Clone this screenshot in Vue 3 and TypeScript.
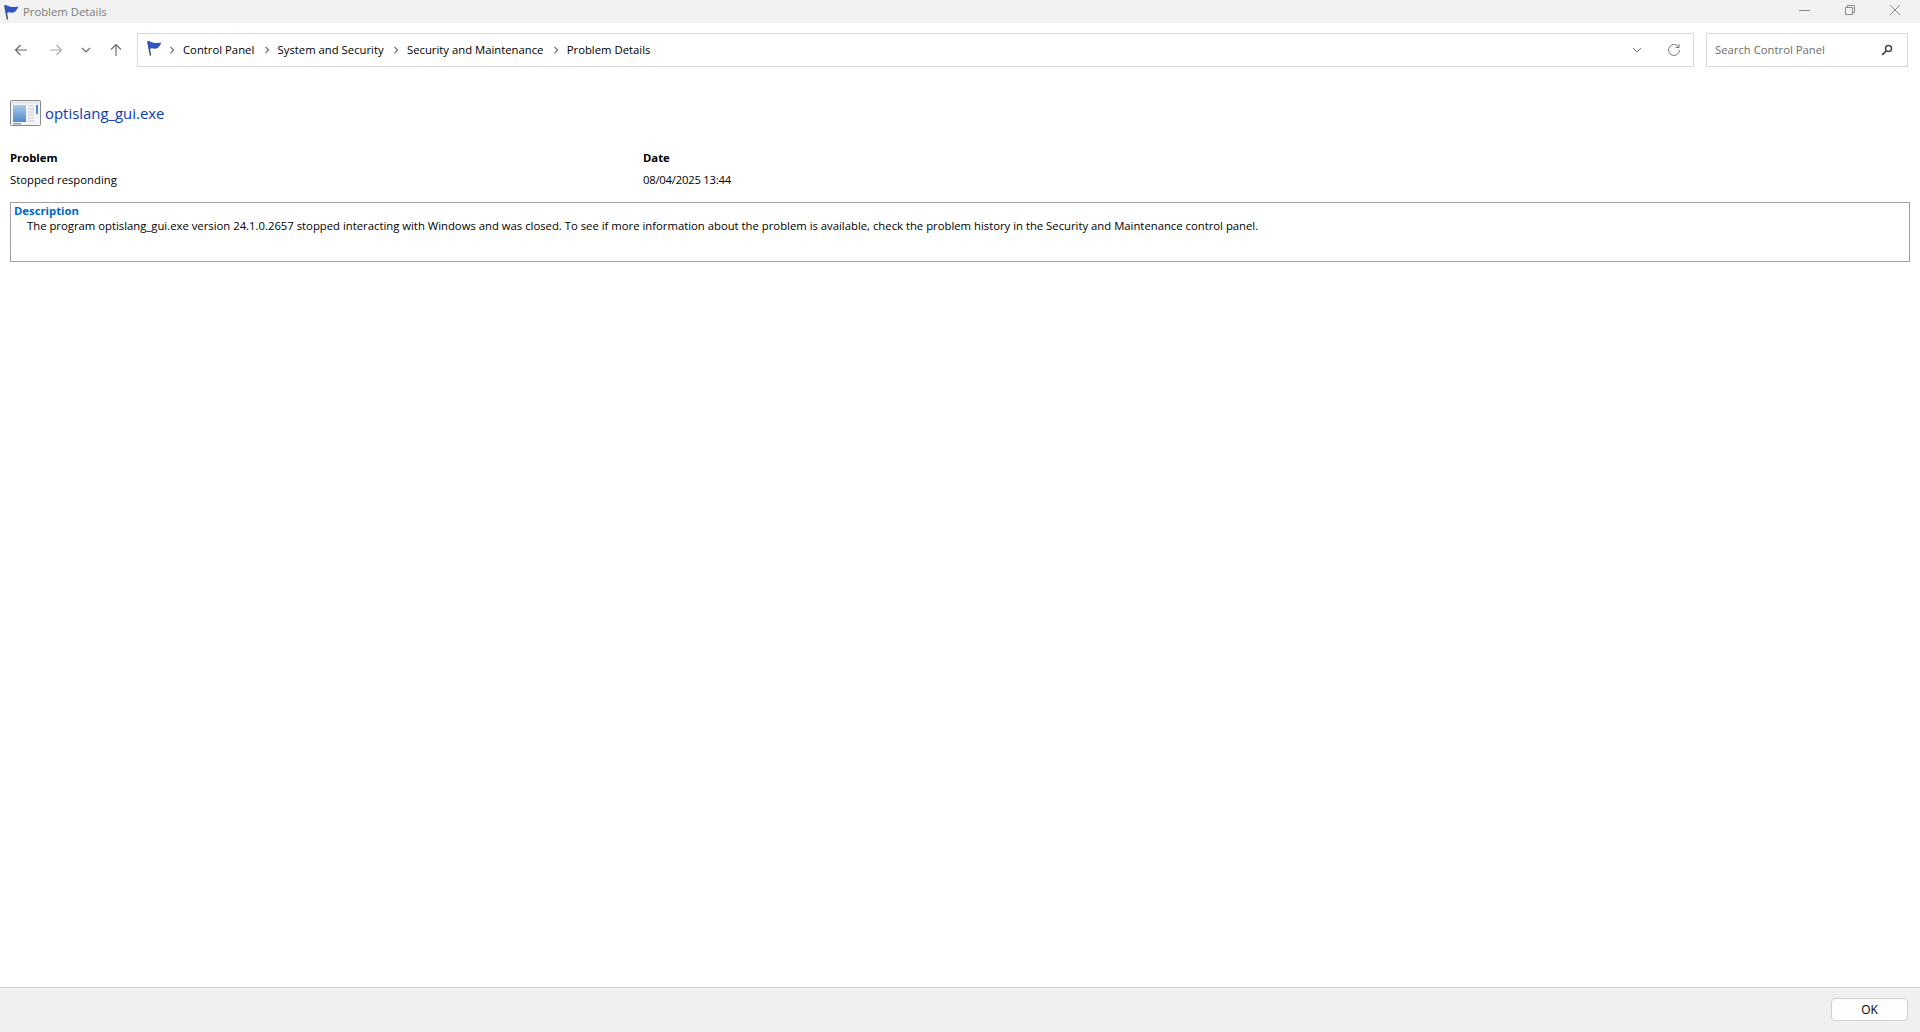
<script setup lang="ts">
const crumbs: string[] = ['Control Panel', 'System and Security', 'Security and Maintenance', 'Problem Details']
</script>

<template>
  <div class="window">
    <header class="titlebar">
      <svg class="title-flag" viewBox="0 0 16 16" width="16" height="16">
        <path d="M4.500 15.500 1.800 1.500" stroke="#3d4a5c" stroke-width="1.400" fill="none" />
        <path d="M1.500 .8c2.700.4 4.700 1.900 6.900 2.200 2.100.3 4.600 0 7.100-.6-.9 2-2.300 4-3.700 5.600-2 1-3.500.9-4.700.5-1.500-.5-2.500-.2-3.600 2z" fill="#2f55c8" />
      </svg>
      <span class="title-text">Problem Details</span>
      <div class="window-buttons">
        <svg viewBox="0 0 12 12" width="12" height="12"><path d="M0 6.500h11" stroke="#8a8a8a" fill="none" /></svg>
        <svg viewBox="0 0 12 12" width="12" height="12"><path d="M1.500 3.500h7v7h-7zM3.500 3.500v-2h7v7h-2" stroke="#8a8a8a" fill="none" /></svg>
        <svg viewBox="0 0 12 12" width="12" height="12"><path d="M1 1l10 10M11 1 1 11" stroke="#8a8a8a" fill="none" /></svg>
      </div>
    </header>

    <nav class="toolbar">
      <div class="nav-buttons">
        <svg class="back" viewBox="0 0 14 14" width="14" height="14"><path d="M13 7H1.500M6.500 2 1.500 7l5 5" stroke="#666" stroke-width="1.100" fill="none" /></svg>
        <svg class="forward" viewBox="0 0 14 14" width="14" height="14"><path d="M1 7h11.500M7.500 2l5 5-5 5" stroke="#aaa" stroke-width="1.100" fill="none" /></svg>
        <svg class="recent" viewBox="0 0 10 10" width="10" height="10"><path d="M1 3l4 4 4-4" stroke="#666" stroke-width="1.100" fill="none" /></svg>
        <svg class="up" viewBox="0 0 14 14" width="14" height="14"><path d="M7 13V1.500M2 6.500l5-5 5 5" stroke="#666" stroke-width="1.100" fill="none" /></svg>
      </div>
      <div class="address">
        <svg class="flag" viewBox="0 0 16 16" width="16" height="16">
          <path d="M4.500 15.500 1.800 1.500" stroke="#3d4a5c" stroke-width="1.400" fill="none" />
          <path d="M1.500 .8c2.700.4 4.700 1.900 6.900 2.200 2.100.3 4.600 0 7.100-.6-.9 2-2.300 4-3.700 5.600-2 1-3.500.9-4.700.5-1.500-.5-2.500-.2-3.600 2z" fill="#2f55c8" />
        </svg>
        <template v-for="c in crumbs" :key="c">
          <svg class="sep" viewBox="0 0 6 8" width="6" height="8"><path d="M1.500 .8 4.700 4 1.500 7.200" stroke="#666" stroke-width="1.100" fill="none" /></svg>
          <span class="crumb">{{ c }}</span>
        </template>
        <div class="address-end">
          <svg viewBox="0 0 10 6" width="10" height="6"><path d="M1 1l4 4 4-4" stroke="#777" fill="none" /></svg>
          <svg viewBox="0 0 14 14" width="14" height="14"><path d="M11.800 4.300A5.500 5.500 0 1 0 12.500 7M12 1v3.500H8.500" stroke="#777" fill="none" /></svg>
        </div>
      </div>
      <div class="search">
        <span class="search-text">Search Control Panel</span>
        <svg viewBox="0 0 12 12" width="12" height="12"><circle cx="7.500" cy="4.500" r="3" stroke="#444" stroke-width="1.500" fill="none" /><path d="M5.200 6.800 1.200 10.800" stroke="#444" stroke-width="1.700" fill="none" /></svg>
      </div>
    </nav>

    <main class="content">
      <div class="app-head">
        <svg class="app-icon" viewBox="0 0 31 26" width="31" height="26">
          <defs>
            <linearGradient id="pane" x1="0" y1="0" x2="0" y2="1">
              <stop offset="0" stop-color="#a9c9e8" />
              <stop offset="1" stop-color="#4f8ccd" />
            </linearGradient>
          </defs>
          <rect x=".5" y=".5" width="30" height="25" rx="1" fill="#f4f5f6" stroke="#85888c" />
          <rect x="1.500" y="1.500" width="28" height="2" fill="#e2e4e7" />
          <rect x="3" y="5" width="13" height="17" fill="url(#pane)" />
          <path d="M18 6h6M18 9h6M18 12h6M18 15h6M18 18h6M18 21h6" stroke="#c4c7cb" fill="none" />
          <rect x="26" y="5" width="2" height="9" fill="#4a8fd6" />
          <rect x="3" y="23" width="8" height="1.500" fill="#9a9da1" />
        </svg>
        <span class="app-name">optislang_gui.exe</span>
      </div>
      <div class="facts">
        <div class="fact problem">
          <div class="label">Problem</div>
          <div class="value">Stopped responding</div>
        </div>
        <div class="fact">
          <div class="label">Date</div>
          <div class="value date">08/04/2025 13:44</div>
        </div>
      </div>
      <section class="description">
        <div class="desc-title">Description</div>
        <p class="desc-text">The program optislang_gui.exe version 24.1.0.2657 stopped interacting with Windows and was closed. To see if more information about the problem is available, check the problem history in the Security and Maintenance control panel.</p>
      </section>
    </main>

    <footer class="footer">
      <button class="ok" type="button">OK</button>
    </footer>
  </div>
</template>

<style scoped>
.window {
  width: 1920px;
  height: 1032px;
  display: flex;
  flex-direction: column;
  background: #fff;
  color: #000;
  font-family: "Open Sans", "Noto Sans", "Liberation Sans", sans-serif;
  font-size: 11.300px;
  overflow: hidden;
}
.titlebar {
  height: 23px;
  flex: none;
  background: #f2f2f2;
  display: flex;
  align-items: center;
  padding: 0 19px 0 3px;
}
.title-text {
  margin-left: 4px;
  color: #7a7a7a;
}
.window-buttons {
  margin-left: auto;
  display: flex;
  gap: 33px;
  align-items: center;
  margin-bottom: 3px;
}
.toolbar {
  height: 34px;
  margin-top: 10px;
  flex: none;
  display: flex;
  padding-right: 12px;
}
.nav-buttons {
  width: 137px;
  flex: none;
  display: flex;
  align-items: center;
}
.back { margin-left: 14px; }
.forward { margin-left: 21px; }
.recent { margin-left: 18px; }
.up { margin-left: 18px; }
.address {
  width: 1557px;
  flex: none;
  box-sizing: border-box;
  border: 1px solid #d9d9d9;
  display: flex;
  align-items: center;
  padding-left: 8px;
  padding-bottom: 1px;
}
.sep { margin: 0 8px 0 7px; }
.address > .flag { margin-bottom: 3px; }
.crumb { margin-right: 2.300px; }
.address-end {
  margin-left: auto;
  display: flex;
  align-items: center;
  gap: 25px;
  padding-right: 12px;
}
.search {
  width: 202px;
  flex: none;
  margin-left: 12px;
  box-sizing: border-box;
  border: 1px solid #d9d9d9;
  display: flex;
  align-items: center;
  justify-content: space-between;
  padding: 0 14px 1px 8px;
  color: #6d6d6d;
}
.content {
  flex: 1;
  padding: 33px 10px 0;
}
.app-head {
  display: flex;
  align-items: center;
  height: 26px;
}
.app-name {
  margin-left: 4px;
  font-size: 14.900px;
  color: #0a3db4;
}
.facts {
  display: flex;
  margin-top: 23px;
}
.problem { width: 633px; }
.label {
  font-weight: 700;
  height: 22px;
  line-height: 18px;
}
.value { line-height: 18px; }
.date { letter-spacing: -0.230px; }
.description {
  margin-top: 13px;
  height: 60px;
  box-sizing: border-box;
  border: 1px solid #a0a0a0;
  padding: 0 3px;
}
.desc-title {
  color: #0066cc;
  font-weight: 700;
  line-height: 15px;
}
.desc-text {
  margin: 0;
  padding-left: 13px;
  line-height: 15px;
}
.footer {
  height: 45px;
  flex: none;
  box-sizing: border-box;
  background: #f0f0f0;
  border-top: 1px solid #d0d0d0;
  display: flex;
  justify-content: flex-end;
  padding: 10px 12px 0 0;
}
.ok {
  width: 77px;
  height: 23px;
  box-sizing: border-box;
  background: #fdfdfd;
  border: 1px solid #d0d0d0;
  border-radius: 4px;
  font: inherit;
  font-size: 12px;
  color: #000;
  padding: 0;
}
</style>
